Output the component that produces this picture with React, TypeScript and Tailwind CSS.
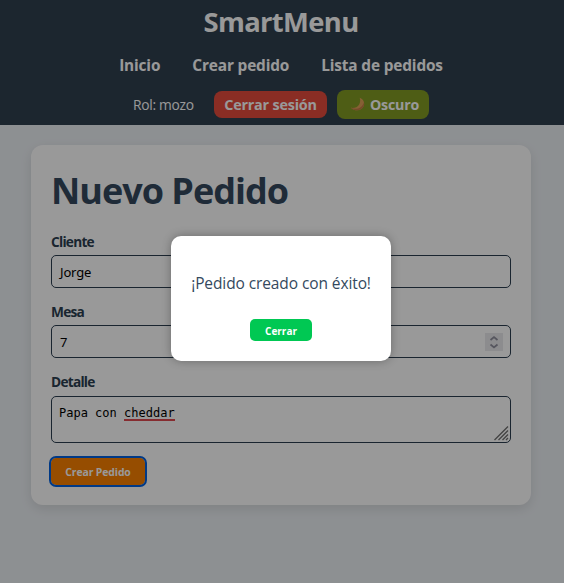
import type { ReactNode } from 'react';

const labelClass = "block h-5 text-[13.7px] leading-[20px] font-bold tracking-[-0.75px] text-[#2c3e50] font-['Open_Sans',sans-serif]";
const fieldClass = "flex items-center h-[33px] rounded-[5px] border border-[#2c3e50] px-[8px] pt-[2px] text-[13px] tracking-[-0.15px] text-black";

function MoonIcon() {
  return (
    <svg width="15" height="15" viewBox="0 0 15 15" className="shrink-0">
      <path d="M9.700.8C13.300 2 15 5.600 13.700 9 12.200 13.200 6 15.300.8 10.800 4.300 11.400 7.600 10.200 9.200 7.400 10.400 5.200 10.400 3 9.700.8Z" fill="#dfa058" />
      <path d="M13.900 5.500c.4 1.300.3 2.400-.2 3.500C12.200 13.200 6 15.300.8 10.800c5 2.200 11.300.8 13.100-5.300Z" fill="#c47c46" />
    </svg>
  );
}

function Field({ label, children }: { label: string; children: ReactNode }) {
  return (
    <div>
      <span className={labelClass}>{label}</span>
      {children}
    </div>
  );
}

export default function App() {
  return (
    <div className="relative h-[583px] w-[564px] overflow-hidden bg-[#ecf0f4] font-['Open_Sans','Noto_Sans',sans-serif]">
      <header className="flex h-[125px] flex-col items-center bg-[#2f404f] pr-[2px] whitespace-nowrap text-white">
        <div className="mt-[3px] h-[38px] text-[27.4px] leading-[38px] font-bold tracking-[-0.65px]">SmartMenu</div>
        <nav className="mt-[13px] flex h-6 gap-8 text-[15.4px] leading-6 font-bold tracking-[-0.15px]">
          <span>Inicio</span>
          <span>Crear pedido</span>
          <span>Lista de pedidos</span>
        </nav>
        <div className="mt-3 flex h-[29px] items-center">
          <span className="w-[81px] pt-px text-[13.8px] tracking-[-0.3px]">Rol: mozo</span>
          <span className="flex h-[27px] w-[113px] items-center justify-center rounded-lg bg-[#e74c3c] text-[14.400px] font-bold tracking-[-0.2px]">Cerrar sesión</span>
          <span className="ml-[10px] flex h-[29px] w-[92px] items-center gap-[5px] rounded-lg bg-[#839b24] pl-[13px] text-[14.200px] font-bold tracking-[-0.2px]">
            <MoonIcon />
            Oscuro
          </span>
        </div>
      </header>

      <main className="mt-5 ml-[31px] h-[360px] w-[500px] rounded-xl bg-white px-5 shadow-[0_4px_12px_rgba(0,0,0,0.1)]">
        <h1 className="h-[87px] pt-[21px] text-[36px] leading-[50px] font-bold tracking-[-1px] text-[#34495e]">Nuevo Pedido</h1>
        <Field label="Cliente">
          <div className={`mt-[3px] ${fieldClass} font-['Noto_Sans',sans-serif]`}>Jorge</div>
        </Field>
        <div className="mt-[14px]">
          <Field label="Mesa">
            <div className={`mt-[3px] justify-between ${fieldClass} font-['Noto_Sans',sans-serif]`}>
              7
              <span className="-mt-[2px] mr-[-1px] flex h-[18px] w-[18px] items-center justify-center bg-[#e9e9ed]">
                <svg width="10" height="14" viewBox="0 0 10 14" fill="none" stroke="#8f8f9d" strokeWidth="1.7">
                  <path d="m1.500 5 3.500-3 3.500 3M1.500 9.500l3.500 3 3.500-3" />
                </svg>
              </span>
            </div>
          </Field>
        </div>
        <div className="mt-[14px]">
          <Field label="Detalle">
            <div className="relative mt-[4px] h-[47px] rounded-[5px] border border-[#2c3e50] px-[7px] pt-[8px] text-[12px] leading-4 text-black font-['DejaVu_Sans_Mono',monospace]">
              Papa con <span className="inline-block h-4 border-b-2 border-[#e04a50]">cheddar</span>
              <svg className="absolute right-px bottom-px" width="15" height="15" viewBox="0 0 15 15" stroke="#707070" strokeWidth="1.3" fill="none">
                <path d="M.5 14 14 .5M4.500 14 14 4.500M8.500 14 14 8.500M12 14l2-2" />
              </svg>
            </div>
          </Field>
        </div>
        <button className="mt-[15px] block h-[27px] w-[94px] rounded-[5px] bg-[#fb8000] pt-[2px] text-[10.400px] font-bold tracking-[-0.1px] text-white outline-2 outline-[#0060df]">Crear Pedido</button>
      </main>

      <div className="absolute inset-0 flex items-start justify-center bg-black/40 pr-[2px] pt-[236px]">
        <div role="dialog" className="flex h-[125px] w-[220px] flex-col items-center rounded-[10px] bg-white shadow-[0_0_10px_rgba(0,0,0,0.3)]">
          <p className="mt-[35px] h-6 text-[15.5px] leading-6 tracking-[-0.1px] whitespace-nowrap text-[#34495e]">¡Pedido creado con éxito!</p>
          <button className="mt-[24px] h-[22px] w-[62px] rounded-[5px] bg-[#00c853] pt-[2px] text-[10px] font-bold text-white">Cerrar</button>
        </div>
      </div>
    </div>
  );
}
